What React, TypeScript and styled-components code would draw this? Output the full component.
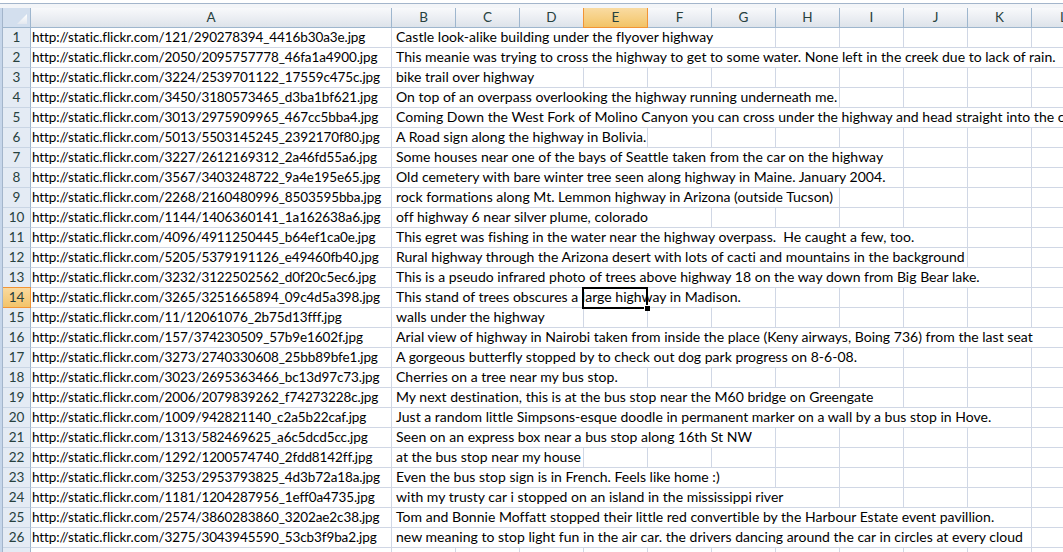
import React from "react";
import styled, { createGlobalStyle, css } from "styled-components";

const GRID = "#d0d7e5";
const HEAD_LINE = "#9eb6ce";
const ORANGE = "#f29436";
const HEAD_TEXT = "#27413e";

const GlobalStyle = createGlobalStyle`
  html, body {
    margin: 0;
    padding: 0;
    background: #fff;
    overflow: hidden;
  }
  body {
    font-family: Lato, "Noto Sans", sans-serif;
  }
`;

const Sheet = styled.div`
  position: relative;
  width: 1063px;
  height: 552px;
  overflow: hidden;
  font-size: 13.5px;
  color: #000;
`;

const TopBar = styled.div`
  height: 3px;
  background: #fff;
  border-bottom: 1px solid #a3b5cb;
`;

const TopGap = styled.div`
  height: 4px;
  background: #f3f5f8;
`;

const Body = styled.div`
  display: flex;
`;

const LeftEdge = styled.div`
  flex: none;
  width: 3px;
  box-sizing: border-box;
  background: #c6d6ea;
  border-right: 1px solid #a3b5cb;
`;

const Grid = styled.div`
  flex: 1;
  min-width: 0;
`;

const Row = styled.div`
  display: flex;
  height: 20px;
`;

const Corner = styled.div`
  position: relative;
  flex: none;
  width: 28px;
  height: 20px;
  box-sizing: border-box;
  background: #d3dfee;
  border-right: 1px solid ${HEAD_LINE};
  border-bottom: 1px solid ${HEAD_LINE};

  &::after {
    content: "";
    position: absolute;
    right: 3px;
    bottom: 3px;
    width: 10px;
    height: 10px;
    background: linear-gradient(#ffffff, #e3e8ef);
    clip-path: polygon(100% 0, 100% 100%, 0 100%);
  }
`;

const ColHead = styled.div<{ $w: number; $active?: boolean }>`
  flex: none;
  width: ${(p) => p.$w}px;
  height: 20px;
  box-sizing: border-box;
  border-right: 1px solid ${HEAD_LINE};
  border-bottom: 1px solid ${HEAD_LINE};
  background: linear-gradient(#f8f9fb, #eaedf2 55%, #dde3ea);
  color: ${HEAD_TEXT};
  text-align: center;
  line-height: 19px;

  ${(p) =>
    p.$active &&
    css`
      background: linear-gradient(#f9dba2, #f6cf82 55%, #f2c366);
      border-color: ${ORANGE};
      box-shadow: -1px 0 0 ${ORANGE};
    `}
`;

const RowHead = styled.div<{ $active?: boolean }>`
  flex: none;
  width: 28px;
  height: 20px;
  box-sizing: border-box;
  background: #e4ebf4;
  border-right: 1px solid ${HEAD_LINE};
  border-bottom: 1px solid #c9d5e4;
  color: ${HEAD_TEXT};
  text-align: center;
  line-height: 19px;

  ${(p) =>
    p.$active &&
    css`
      background: linear-gradient(#f9d99e, #f3c46a);
      border-color: ${ORANGE};
      box-shadow: 0 -1px 0 ${ORANGE};
    `}
`;

const CellA = styled.div`
  flex: none;
  width: 361px;
  height: 20px;
  box-sizing: border-box;
  padding: 0 1px;
  border-right: 1px solid ${GRID};
  border-bottom: 1px solid ${GRID};
  font-size: 13.5px;
  letter-spacing: -0.1px;
  line-height: 18px;
  white-space: pre;
  overflow: hidden;
`;

const Columns = styled.div`
  flex: none;
  display: grid;
  grid-template-columns: repeat(11, 64px);
`;

const Cell = styled.div<{ $span?: number }>`
  height: 20px;
  box-sizing: border-box;
  padding: 0 4px;
  border-right: 1px solid ${GRID};
  border-bottom: 1px solid ${GRID};
  font-size: 14px;
  letter-spacing: 0.02px;
  line-height: 18px;
  white-space: pre;
  ${(p) =>
    p.$span &&
    css`
      grid-column: span ${p.$span};
    `}
`;

const Selection = styled.div`
  position: absolute;
  left: 582px;
  top: 287px;
  width: 66px;
  height: 22px;
  box-sizing: border-box;
  border: 2px solid #000;
  pointer-events: none;
`;

const FillHandle = styled.div`
  position: absolute;
  right: -4px;
  bottom: -4px;
  width: 6px;
  height: 6px;
  box-sizing: border-box;
  background: #000;
  border-top: 1px solid #fff;
  border-left: 1px solid #fff;
`;

const COLS = ["B", "C", "D", "E", "F", "G", "H", "I", "J", "K", "L"];

// url, caption, number of columns the caption spills over (B..)
const rows: [string, string, number][] = [
  ["http://static.flickr.com/121/290278394_4416b30a3e.jpg", "Castle look-alike building under the flyover highway", 6],
  ["http://static.flickr.com/2050/2095757778_46fa1a4900.jpg", "This meanie was trying to cross the highway to get to some water. None left in the creek due to lack of rain.", 11],
  ["http://static.flickr.com/3224/2539701122_17559c475c.jpg", "bike trail over highway", 3],
  ["http://static.flickr.com/3450/3180573465_d3ba1bf621.jpg", "On top of an overpass overlooking the highway running underneath me.", 7],
  ["http://static.flickr.com/3013/2975909965_467cc5bba4.jpg", "Coming Down the West Fork of Molino Canyon you can cross under the highway and head straight into the canyon.", 11],
  ["http://static.flickr.com/5013/5503145245_2392170f80.jpg", "A Road sign along the highway in Bolivia.", 4],
  ["http://static.flickr.com/3227/2612169312_2a46fd55a6.jpg", "Some houses near one of the bays of Seattle taken from the car on the highway", 8],
  ["http://static.flickr.com/3567/3403248722_9a4e195e65.jpg", "Old cemetery with bare winter tree seen along highway in Maine. January 2004.", 8],
  ["http://static.flickr.com/2268/2160480996_8503595bba.jpg", "rock formations along Mt. Lemmon highway in Arizona (outside Tucson)", 7],
  ["http://static.flickr.com/1144/1406360141_1a162638a6.jpg", "off highway 6 near silver plume, colorado", 5],
  ["http://static.flickr.com/4096/4911250445_b64ef1ca0e.jpg", "This egret was fishing in the water near the highway overpass.  He caught a few, too.", 9],
  ["http://static.flickr.com/5205/5379191126_e49460fb40.jpg", "Rural highway through the Arizona desert with lots of cacti and mountains in the background", 9],
  ["http://static.flickr.com/3232/3122502562_d0f20c5ec6.jpg", "This is a pseudo infrared photo of trees above highway 18 on the way down from Big Bear lake.", 10],
  ["http://static.flickr.com/3265/3251665894_09c4d5a398.jpg", "This stand of trees obscures a large highway in Madison.", 6],
  ["http://static.flickr.com/11/12061076_2b75d13fff.jpg", "walls under the highway", 3],
  ["http://static.flickr.com/157/374230509_57b9e1602f.jpg", "Arial view of highway in Nairobi taken from inside the place (Keny airways, Boing 736) from the last seat", 11],
  ["http://static.flickr.com/3273/2740330608_25bb89bfe1.jpg", "A gorgeous butterfly stopped by to check out dog park progress on 8-6-08.", 8],
  ["http://static.flickr.com/3023/2695363466_bc13d97c73.jpg", "Cherries on a tree near my bus stop.", 4],
  ["http://static.flickr.com/2006/2079839262_f74273228c.jpg", "My next destination, this is at the bus stop near the M60 bridge on Greengate", 8],
  ["http://static.flickr.com/1009/942821140_c2a5b22caf.jpg", "Just a random little Simpsons-esque doodle in permanent marker on a wall by a bus stop in Hove.", 10],
  ["http://static.flickr.com/1313/582469625_a6c5dcd5cc.jpg", "Seen on an express box near a bus stop along 16th St NW", 6],
  ["http://static.flickr.com/1292/1200574740_2fdd8142ff.jpg", "at the bus stop near my house", 3],
  ["http://static.flickr.com/3253/2953793825_4d3b72a18a.jpg", "Even the bus stop sign is in French. Feels like home :)", 6],
  ["http://static.flickr.com/1181/1204287956_1eff0a4735.jpg", "with my trusty car i stopped on an island in the mississippi river", 7],
  ["http://static.flickr.com/2574/3860283860_3202ae2c38.jpg", "Tom and Bonnie Moffatt stopped their little red convertible by the Harbour Estate event pavillion.", 10],
  ["http://static.flickr.com/3275/3043945590_53cb3f9ba2.jpg", "new meaning to stop light fun in the air car. the drivers dancing around the car in circles at every cloud", 10],
];

const App = () => {
  return (
    <Sheet>
      <GlobalStyle />
      <TopBar />
      <TopGap />
      <Body>
        <LeftEdge />
        <Grid>
          <Row>
            <Corner />
            <ColHead $w={361}>A</ColHead>
            {COLS.map((c) => (
              <ColHead key={c} $w={64} $active={c === "E"}>
                {c}
              </ColHead>
            ))}
          </Row>
          {rows.map(([url, text, span], i) => (
            <Row key={i}>
              <RowHead $active={i === 13}>{i + 1}</RowHead>
              <CellA>{url}</CellA>
              <Columns>
                <Cell $span={span}>{text}</Cell>
                {Array.from({ length: 11 - span }, (_, j) => (
                  <Cell key={j} />
                ))}
              </Columns>
            </Row>
          ))}
          <Row>
            <RowHead />
            <CellA />
            <Columns>
              {COLS.map((c) => (
                <Cell key={c} />
              ))}
            </Columns>
          </Row>
        </Grid>
      </Body>
      <Selection>
        <FillHandle />
      </Selection>
    </Sheet>
  );
};

export default App;
